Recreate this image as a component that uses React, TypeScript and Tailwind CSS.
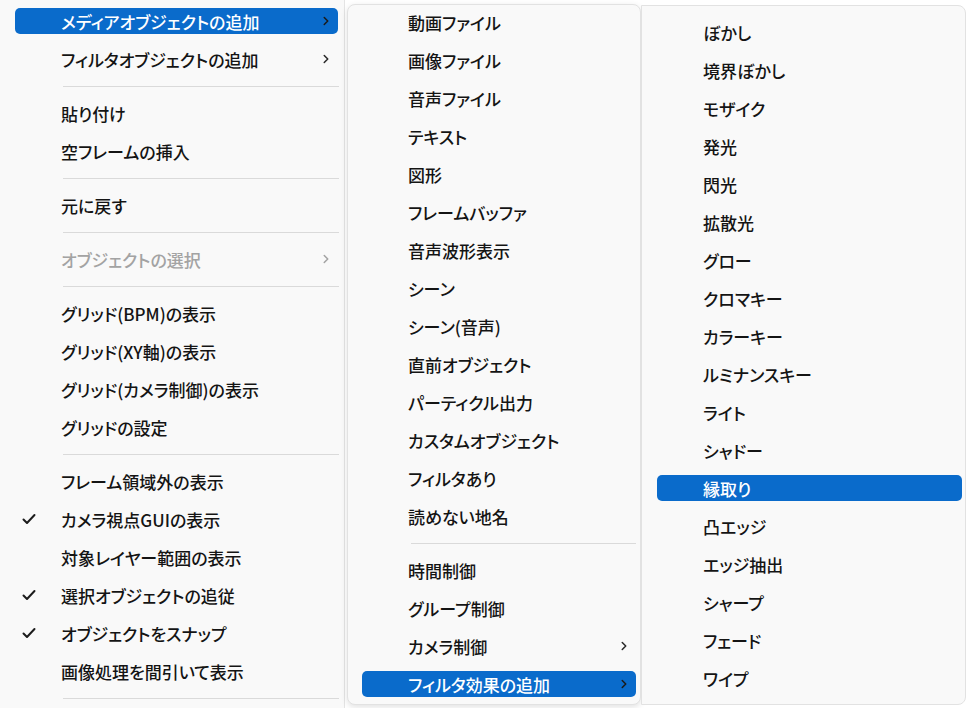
import { ChevronRight } from 'lucide-react';

type Item =
  | { sep: true }
  | { sep?: false; label: string; checked?: boolean; sub?: boolean; disabled?: boolean; active?: boolean };

const leftItems: Item[] = [
  { label: 'メディアオブジェクトの追加', sub: true, active: true },
  { label: 'フィルタオブジェクトの追加', sub: true },
  { sep: true },
  { label: '貼り付け' },
  { label: '空フレームの挿入' },
  { sep: true },
  { label: '元に戻す' },
  { sep: true },
  { label: 'オブジェクトの選択', sub: true, disabled: true },
  { sep: true },
  { label: 'グリッド(BPM)の表示' },
  { label: 'グリッド(XY軸)の表示' },
  { label: 'グリッド(カメラ制御)の表示' },
  { label: 'グリッドの設定' },
  { sep: true },
  { label: 'フレーム領域外の表示' },
  { label: 'カメラ視点GUIの表示', checked: true },
  { label: '対象レイヤー範囲の表示' },
  { label: '選択オブジェクトの追従', checked: true },
  { label: 'オブジェクトをスナップ', checked: true },
  { label: '画像処理を間引いて表示' },
  { sep: true },
];

const midItems: Item[] = [
  { label: '動画ファイル' },
  { label: '画像ファイル' },
  { label: '音声ファイル' },
  { label: 'テキスト' },
  { label: '図形' },
  { label: 'フレームバッファ' },
  { label: '音声波形表示' },
  { label: 'シーン' },
  { label: 'シーン(音声)' },
  { label: '直前オブジェクト' },
  { label: 'パーティクル出力' },
  { label: 'カスタムオブジェクト' },
  { label: 'フィルタあり' },
  { label: '読めない地名' },
  { sep: true },
  { label: '時間制御' },
  { label: 'グループ制御' },
  { label: 'カメラ制御', sub: true },
  { label: 'フィルタ効果の追加', sub: true, active: true },
];

const rightItems: Item[] = [
  { label: 'ぼかし' },
  { label: '境界ぼかし' },
  { label: 'モザイク' },
  { label: '発光' },
  { label: '閃光' },
  { label: '拡散光' },
  { label: 'グロー' },
  { label: 'クロマキー' },
  { label: 'カラーキー' },
  { label: 'ルミナンスキー' },
  { label: 'ライト' },
  { label: 'シャドー' },
  { label: '縁取り', active: true },
  { label: '凸エッジ' },
  { label: 'エッジ抽出' },
  { label: 'シャープ' },
  { label: 'フェード' },
  { label: 'ワイプ' },
];

function CheckMark() {
  return (
    <svg width="16" height="16" viewBox="0 0 16 16" fill="none">
      <path d="M2.5 8.5 L6 12 L13.5 4" stroke="#1c1c1c" strokeWidth="2" strokeLinecap="round" strokeLinejoin="round" />
    </svg>
  );
}

function MenuList({ items, rowPad, sepPad }: { items: Item[]; rowPad: string; sepPad: string }) {
  return (
    <>
      {items.map((it, i) => {
        if (it.sep) {
          return (
            <div key={i} className={`h-[16px] flex items-center ${sepPad}`}>
              <div className="h-px w-full bg-[#dadada]" />
            </div>
          );
        }
        return (
          <div key={i} className={`h-[38px] flex items-center ${rowPad}`}>
            <div
              className={`relative h-[26px] w-full rounded-[5px] flex items-center pl-[46px] pr-[5px] ${
                it.active ? 'bg-[#0a6bcb] text-white' : it.disabled ? 'text-[#a3a3a3]' : 'text-[#141414]'
              }`}
            >
              {it.checked && (
                <span className="absolute left-[6px] top-[5px]">
                  <CheckMark />
                </span>
              )}
              <span className="flex-1 whitespace-nowrap leading-none">{it.label}</span>
              {it.sub && (
                <ChevronRight
                  size={14}
                  strokeWidth={2.6}
                  className={it.active ? 'text-[#1b1b1b]' : it.disabled ? 'text-[#a3a3a3]' : 'text-[#2a2a2a]'}
                />
              )}
            </div>
          </div>
        );
      })}
    </>
  );
}

export default function App() {
  return (
    <div className="w-[972px] h-[708px] overflow-hidden bg-white flex items-start text-[17px] font-medium font-['Noto_Sans_CJK_JP','Noto_Sans',sans-serif] [font-feature-settings:'palt']">
      {/* 左メニュー */}
      <div className="w-[345px] h-[708px] shrink-0 bg-[#f9f9f9] border-r border-[#e4e4e4] pt-[2px]">
        <MenuList items={leftItems} rowPad="pl-[15px] pr-[6px]" sepPad="pl-[63px] pr-[5px]" />
      </div>

      {/* メディアオブジェクト */}
      <div className="mt-[4px] ml-[2px] w-[294px] h-[701px] shrink-0 bg-[#f9f9f9] rounded-[8px] border border-[#e2e2e2] shadow-[0_2px_6px_rgba(0,0,0,0.12)]">
        <div className="-mt-[2px]">
          <MenuList items={midItems} rowPad="pl-[14px] pr-[4px]" sepPad="pl-[63px] pr-[4px]" />
        </div>
      </div>

      {/* フィルタ効果 */}
      <div className="mt-[5px] w-[325px] h-[700px] shrink-0 bg-[#f9f9f9] rounded-r-[8px] border border-[#e2e2e2] pt-[7px]">
        <MenuList items={rightItems} rowPad="pl-[15px] pr-[3px]" sepPad="pl-[61px] pr-[4px]" />
      </div>
    </div>
  );
}
